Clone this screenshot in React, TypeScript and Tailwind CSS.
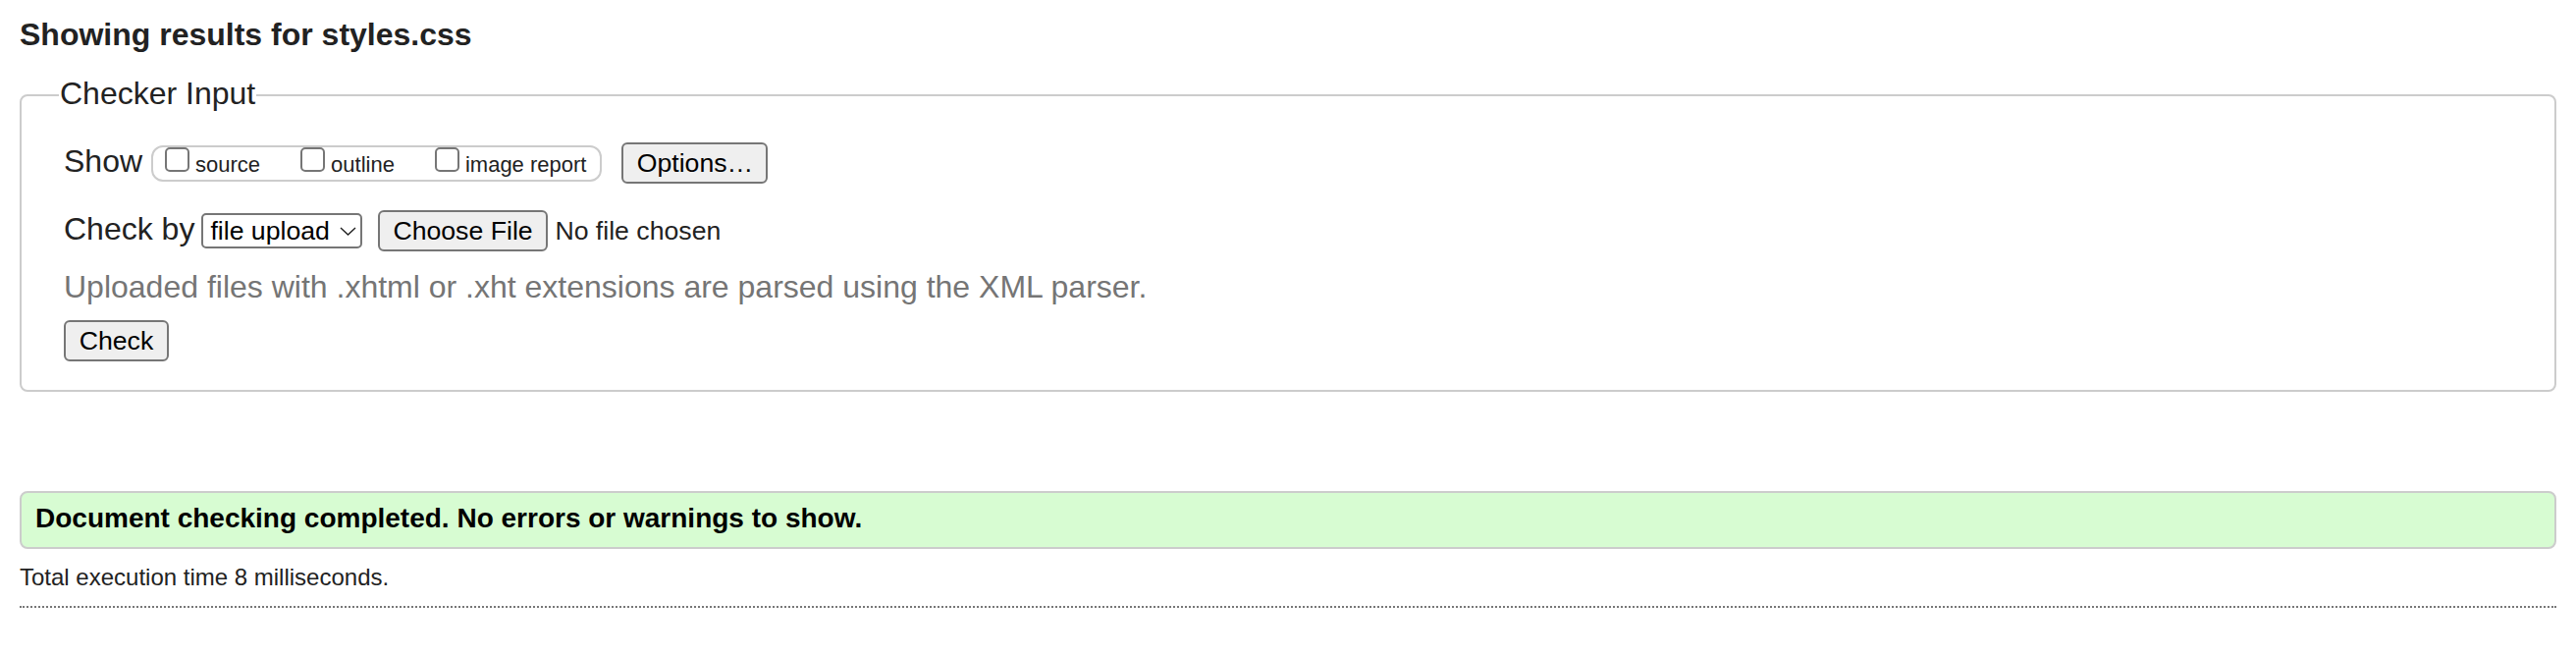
import React from "react";

function Check({ label, className }: { label: string; className: string }) {
  return (
    <label className={className}>
      <input
        type="checkbox"
        className="m-0 h-[25px] w-[25px] shrink-0 appearance-none rounded-[5px] border-2 border-[#767676] bg-white"
      />
      <span className="ml-[6px] mt-[5px] text-[22px] leading-[25px]">{label}</span>
    </label>
  );
}

export default function App() {
  return (
    <div className="min-h-[668px] w-full bg-white px-[20px] pt-[17px] font-['Liberation_Sans',Arial,Helvetica,sans-serif] text-[#222222]">
      <h1 className="text-[32px] font-bold leading-[36px]">Showing results for styles.css</h1>

      <fieldset className="mt-[24px] rounded-[8px] border-2 border-[#cccccc] pb-[29px] pl-[43px] pr-[43px] pt-[28px]">
        <legend className="-ml-[5px] px-[1px] pb-[4px] text-[32px] leading-[36px]">Checker Input</legend>

        <div className="flex h-[42px] items-center">
          <span className="pb-[4px] text-[32px] leading-[36px]">Show</span>
          <span className="ml-[9px] flex h-[37px] items-start rounded-[12px] border-2 border-[#cccccc] pl-[12px] pr-[14px]">
            <Check label="source" className="flex items-start" />
            <Check label="outline" className="ml-[41px] flex items-start" />
            <Check label="image report" className="ml-[41px] flex items-start" />
          </span>
          <button className="ml-[20px] flex h-[42px] w-[149px] items-center justify-center rounded-[6px] border-2 border-[#767676] bg-[#efefef] text-[26.67px] leading-[30px] text-black">
            Options…
          </button>
        </div>

        <div className="mt-[27px] flex h-[42px] items-center">
          <span className="pb-[4px] text-[32px] leading-[36px]">Check by</span>
          <div className="ml-[7px] flex h-[36px] w-[164px] items-center rounded-[5px] border-2 border-[#767676] bg-white pl-[7px] pr-[4px] text-[26.67px] text-black">
            <span className="leading-[30px]">file upload</span>
            <svg className="ml-auto" width="17" height="9" viewBox="0 0 17 9">
              <path d="M1 1 L8.5 8 L16 1" fill="none" stroke="#222222" strokeWidth="1.4" />
            </svg>
          </div>
          <button className="ml-[16px] flex h-[42px] w-[173px] items-center rounded-[6px] border-2 border-[#767676] bg-[#efefef] pl-[13px] text-[26.67px] leading-[30px] text-black">
            Choose File
          </button>
          <span className="ml-[7px] text-[26.67px] leading-[30px] text-[#222222]">No file chosen</span>
        </div>

        <p className="mt-[18px] text-[32px] leading-[36px] text-[#757575]">
          Uploaded files with .xhtml or .xht extensions are parsed using the XML parser.
        </p>

        <div className="mt-[16px] flex">
          <button className="flex h-[42px] w-[107px] items-center justify-center rounded-[6px] border-2 border-[#767676] bg-[#efefef] text-[26.67px] leading-[30px] text-black">
            Check
          </button>
        </div>
      </fieldset>

      <div className="mt-[101px] rounded-[8px] border-2 border-[#cccccc] bg-[#d7fcd2] pb-[13px] pl-[14px] pt-[10px] text-[28px] font-bold leading-[32px] text-black">
        Document checking completed. No errors or warnings to show.
      </div>

      <p className="mt-[15px] text-[24px] leading-[28px]">Total execution time 8 milliseconds.</p>

      <div className="mt-[15px] border-t-2 border-dotted border-[#777777]" />
    </div>
  );
}
